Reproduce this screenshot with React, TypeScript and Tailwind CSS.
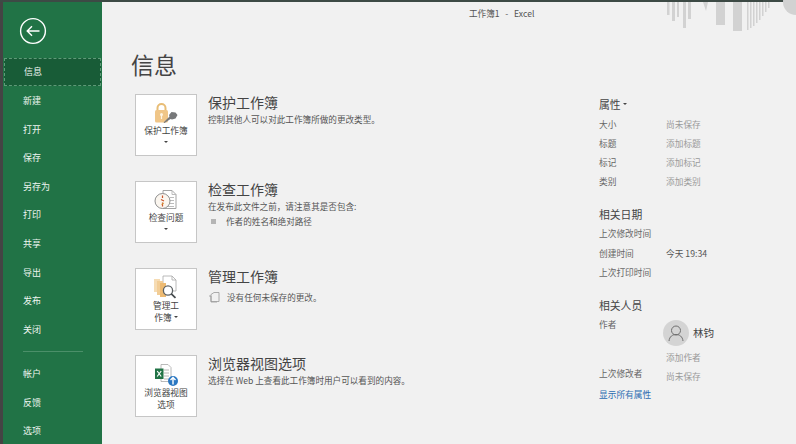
import { ReactNode } from 'react'

const topItems = ['新建', '打开', '保存', '另存为', '打印', '共享', '导出', '发布', '关闭']
const bottomItems = ['帐户', '反馈', '选项']

function BackIcon() {
  return (
    <svg width="28" height="28" viewBox="0 0 28 28" fill="none" stroke="#fff" strokeWidth="1.4">
      <circle cx="14" cy="14" r="12.4" />
      <path d="M20.5 14H8.5M13 9.2 8.2 14l4.8 4.8" />
    </svg>
  )
}

function LockIcon() {
  return (
    <svg width="26" height="26" viewBox="0 0 26 26">
      <path d="M4.500 11V8a4 4 0 0 1 8 0v3" fill="none" stroke="#e8bd76" strokeWidth="2" />
      <rect x="2" y="10" width="13" height="12.500" rx="1.500" fill="#f0c688" />
      <circle cx="8.500" cy="14.500" r="1.500" fill="#fff6e4" />
      <rect x="7.900" y="14.500" width="1.200" height="4.500" fill="#fff6e4" />
      <path d="M10.500 22.500 16.500 16.500l-.5-1.500 2.500-3 4 .5 2 2.500-2 3.500-3.500 1-1.500-.5-6 4z" fill="#77787a" />
    </svg>
  )
}

function InspectIcon() {
  return (
    <svg width="24" height="24" viewBox="0 0 24 24" fill="none">
      <path d="M9 2.500h9l4 4v14H9z" fill="#fff" stroke="#9a9a9a" strokeWidth="0.9" />
      <path d="M18 2.500v4h4M16 9.500h4M16 12.500h4M16 15.500h4M13 18.500h7" stroke="#b4b4b4" strokeWidth="0.9" />
      <circle cx="8.500" cy="13" r="7.500" fill="#fbf6ef" stroke="#8e8e8e" strokeWidth="1" />
      <path d="M8.500 7.500v2.500M7 11.500l3 1.500M8.500 14.500v4" stroke="#c9542d" strokeWidth="1.200" />
      <path d="M10 15 7.500 16.500" stroke="#d9a441" strokeWidth="1" />
    </svg>
  )
}

function ManageIcon() {
  return (
    <svg width="26" height="26" viewBox="0 0 26 26" fill="none">
      <path d="M10 2h9l4 4v11H10z" fill="#fff" stroke="#a8a8a8" strokeWidth="0.8" />
      <path d="M19 2v4h4" stroke="#a8a8a8" strokeWidth="0.8" />
      <path d="M1 5h6v13H1z" fill="#f6dcb4" />
      <path d="M4 7h6v14H4z" fill="#f2cd96" />
      <path d="M7 9h6v14H7z" fill="#edba72" />
      <circle cx="15" cy="16.500" r="4.600" fill="#fff" stroke="#5b6063" strokeWidth="1.300" />
      <path d="m18.300 19.800 4.200 4" stroke="#44494c" strokeWidth="1.700" />
    </svg>
  )
}

function BrowserViewIcon() {
  return (
    <svg width="28" height="26" viewBox="0 0 28 26" fill="none">
      <path d="M9 3.500h7l3 3v14H9z" fill="#fff" stroke="#a8a8a8" strokeWidth="0.8" />
      <path d="M12 9h5M12 12h5M12 15h5M12 18h5" stroke="#b6b6b6" strokeWidth="1" />
      <rect x="3" y="7.500" width="8.500" height="10.500" fill="#217346" />
      <path d="m5.200 10 4 5.500M9.200 10l-4 5.500" stroke="#fff" strokeWidth="1.200" />
      <circle cx="21" cy="20" r="5" fill="#2b78c2" />
      <path d="M21 23.500v-6.500M18.500 19l2.500-2.500 2.500 2.500" stroke="#fff" strokeWidth="1.400" />
    </svg>
  )
}

function Caret() {
  return <span className="inline-block w-0 h-0 border-x-[2px] border-x-transparent border-t-[2px] border-t-[#444] align-middle -translate-y-[2px]" />
}

function ActionRow({ icon, label, title, children }: { icon: ReactNode; label: ReactNode; title: string; children: ReactNode }) {
  return (
    <div className="flex">
      <button className="w-[62px] h-[62px] shrink-0 bg-white border border-[#c6c6c6] flex flex-col items-center pt-[5px] text-[8.7px] leading-[12px] text-[#444]">
        <span className="h-[25px] flex items-center">{icon}</span>
        <span>{label}</span>
      </button>
      <div className="ml-[11px] -mt-[1px]">
        <h2 className="text-[14px] leading-[18px] text-[#444] font-normal">{title}</h2>
        <div className="mt-[1px] text-[8.6px] leading-[14px] text-[#555]">{children}</div>
      </div>
    </div>
  )
}

function Prop({ label, value, tone = 'light', tall = false }: { label: string; value?: string; tone?: 'light' | 'dark'; tall?: boolean }) {
  return (
    <div className={`flex items-center text-[8.7px] ${tall ? 'h-[19.5px]' : 'h-[19px]'}`}>
      <span className="w-[67px] shrink-0 text-[#666]">{label}</span>
      {value && <span className={tone === 'dark' ? 'text-[#555]' : 'text-[#9a9a9a]'}>{value}</span>}
    </div>
  )
}

function SectionTitle({ children }: { children: ReactNode }) {
  return <h3 className="text-[10.8px] leading-[16px] text-[#444] font-normal">{children}</h3>
}

export default function App() {
  return (
    <div className="w-[796px] h-[444px] overflow-hidden flex flex-col bg-[#f1f1f1] relative font-['Noto_Sans_CJK_SC','Liberation_Sans',sans-serif]">
      <div className="h-[2px] shrink-0 bg-[#3d4a45]" />
      <div className="flex flex-1 min-h-0">
        <div className="w-[3px] shrink-0 bg-[#444444]" />

        {/* Sidebar */}
        <nav className="w-[99px] shrink-0 bg-[#217346] text-[9px] text-[#eef5f0]">
          <div className="h-[55.7px] pl-[16px] pt-[15px]">
            <BackIcon />
          </div>
          <div className="h-[28.65px] ml-[1px] mr-[1px] pl-[19px] flex items-center bg-[#185c37] border border-dashed border-[#5f9a78]">信息</div>
          {topItems.map((item) => (
            <div key={item} className="h-[28.65px] pl-[20px] flex items-center">{item}</div>
          ))}
          <div className="h-[15.4px] flex items-center pl-[20px]">
            <div className="w-[60px] h-px bg-[#4b8f69]" />
          </div>
          {bottomItems.map((item) => (
            <div key={item} className="h-[28.65px] pl-[20px] flex items-center">{item}</div>
          ))}
        </nav>

        {/* Main */}
        <main className="flex-1 min-w-0">
          <div className="h-[22px] pl-[367px] flex items-center text-[8.6px] text-[#555] whitespace-pre">工作簿1   -   Excel</div>
          <div className="flex">
            <div className="w-[497px] shrink-0 pl-[29px]">
              <h1 className="h-[30px] mt-[25px] flex items-center text-[23px] text-[#444] font-normal">信息</h1>
              <div className="mt-[15px] pl-[4px] flex flex-col gap-[25px]">
                <ActionRow icon={<LockIcon />} label={<>保护工作簿<br /><Caret /></>} title="保护工作簿">
                  控制其他人可以对此工作簿所做的更改类型。
                </ActionRow>
                <ActionRow icon={<InspectIcon />} label={<>检查问题<br /><Caret /></>} title="检查工作簿">
                  <p>在发布此文件之前，请注意其是否包含:</p>
                  <p className="flex items-center mt-[1px]">
                    <span className="w-[5px] h-[5px] bg-[#b5b5b5] ml-[3px] mr-[10px]" />
                    作者的姓名和绝对路径
                  </p>
                </ActionRow>
                <ActionRow icon={<ManageIcon />} label={<span className="block mt-[1px]">管理工<br />作簿 <Caret /></span>} title="管理工作簿">
                  <p className="flex items-center mt-[5px]">
                    <svg className="mr-[7px]" width="12" height="12" viewBox="0 0 12 12" fill="none" stroke="#9a9a9a" strokeWidth="0.8">
                      <path d="M3 3.500 6 1.500h5v9H3zM1 5h2v6h6" />
                    </svg>
                    没有任何未保存的更改。
                  </p>
                </ActionRow>
                <ActionRow icon={<BrowserViewIcon />} label={<span className="block mt-[1px]">浏览器视图<br />选项</span>} title="浏览器视图选项">
                  选择在 Web 上查看此工作簿时用户可以看到的内容。
                </ActionRow>
              </div>
            </div>

            {/* Properties */}
            <aside className="flex-1 pt-[72px]">
              <SectionTitle>属性 <Caret /></SectionTitle>
              <div className="mt-[3px]">
                <Prop label="大小" value="尚未保存" />
                <Prop label="标题" value="添加标题" />
                <Prop label="标记" value="添加标记" />
                <Prop label="类别" value="添加类别" />
              </div>
              <div className="mt-[15px]">
                <SectionTitle>相关日期</SectionTitle>
              </div>
              <div className="mt-[2px]">
                <Prop tall label="上次修改时间" />
                <Prop tall label="创建时间" value="今天 19:34" tone="dark" />
                <Prop tall label="上次打印时间" />
              </div>
              <div className="mt-[14px]">
                <SectionTitle>相关人员</SectionTitle>
              </div>
              <div className="flex mt-[5px] text-[8.7px]">
                <span className="w-[64px] shrink-0 text-[#666] leading-[14px]">作者</span>
                <div>
                  <div className="flex items-center mt-[2px]">
                    <svg width="26" height="26" viewBox="0 0 26 26" fill="none" stroke="#6f6f6f" strokeWidth="1">
                      <circle cx="13" cy="13" r="13" fill="#d4d4d4" stroke="none" />
                      <circle cx="13" cy="10.500" r="4.500" />
                      <path d="M6 21c.5-4.500 3.500-6.500 7-6.500s6.500 2 7 6.500" />
                    </svg>
                    <span className="ml-[4px] text-[10.5px] text-[#444]">林钧</span>
                  </div>
                  <p className="mt-[6px] ml-[3px] leading-[12px] text-[#9a9a9a]">添加作者</p>
                </div>
              </div>
              <div className="flex mt-[3px] text-[8.7px] leading-[14px]">
                <span className="w-[67px] shrink-0 text-[#666]">上次修改者</span>
                <span className="mt-[3px] text-[#9a9a9a]">尚未保存</span>
              </div>
              <a className="block mt-[4px] text-[8.7px] leading-[14px] text-[#2b6cb0]">显示所有属性</a>
            </aside>
          </div>
        </main>
      </div>

      {/* Backstage pattern */}
      <svg className="absolute top-0 left-[660px]" width="136" height="34" viewBox="0 0 136 34" fill="#d2d2d2">
        <rect x="7" y="2" width="2.500" height="13" />
        <rect x="12" y="2" width="3" height="19" />
        <rect x="17" y="2" width="2" height="15" />
        <rect x="23" y="2" width="3" height="26" />
        <rect x="28" y="2" width="3" height="17" />
        <path d="M43 2h5l-2 9z" />
        <rect x="56" y="2" width="9" height="23" />
        <rect x="73" y="2" width="9" height="29" />
        <rect x="87" y="2" width="1.500" height="28" />
        <rect x="90" y="2" width="1.500" height="26" />
        <rect x="93" y="2" width="1.500" height="24" />
        <rect x="96" y="2" width="1.500" height="21" />
        <rect x="99" y="2" width="1.500" height="18" />
        <rect x="102" y="2" width="1.500" height="14" />
        <rect x="105" y="2" width="1.500" height="10" />
        <rect x="108" y="2" width="1.500" height="6" />
        <circle cx="136" cy="2" r="13" />
      </svg>
    </div>
  )
}
